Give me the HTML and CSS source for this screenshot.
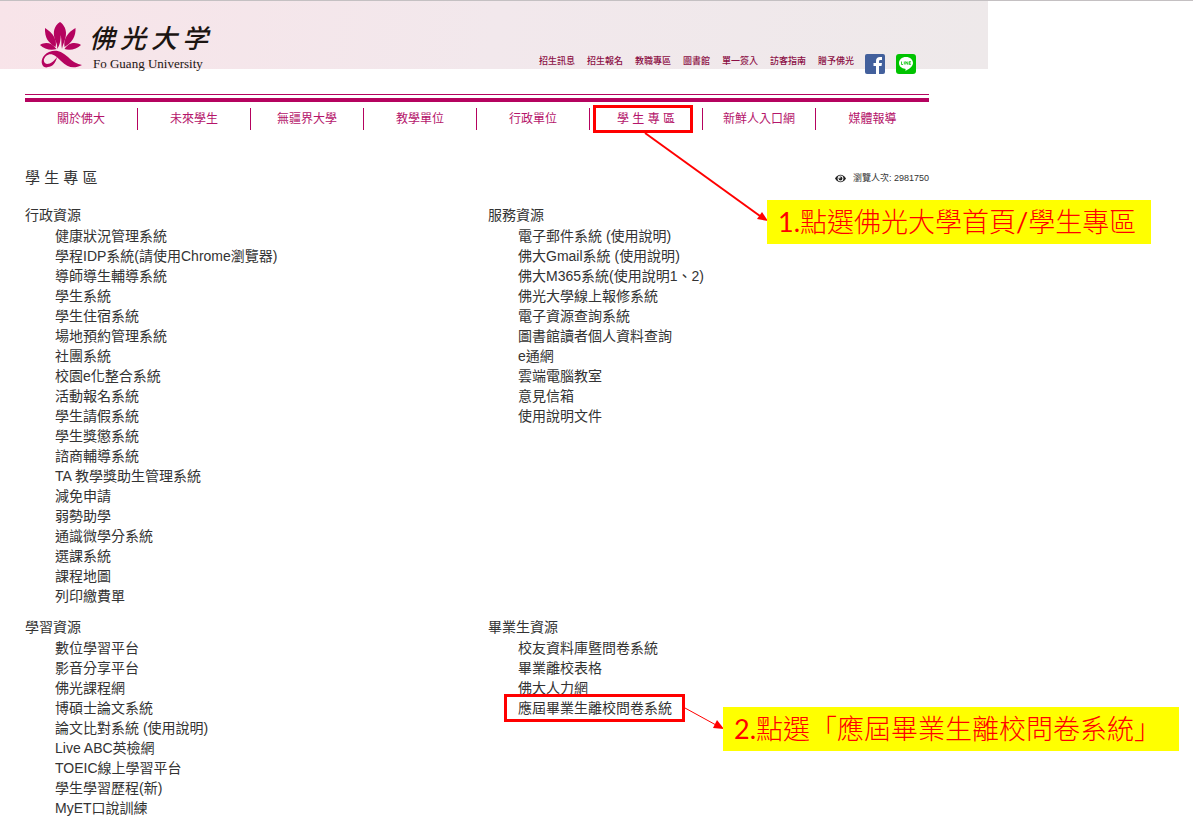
FILE: index.html
```html
<!DOCTYPE html>
<html lang="zh-Hant">
<head>
<meta charset="utf-8">
<meta name="viewport" content="width=device-width, initial-scale=1">
<title>佛光大學 - 學生專區</title>
<link rel="stylesheet" href="styles.css">
</head>
<body>
<div class="page">
  <header class="site-header">
    <a class="logo" href="#">
      <svg class="logo-mark" width="42" height="48" viewBox="0 0 42 48" aria-hidden="true">
        <g fill="#b5035f">
          <path d="M20 1C14 5 13 11 14.500 17C15.500 21 18 23 17 28C19.500 25 20.500 21 20.800 14C21.800 20 21 24 22 28C23 22 26 19 26 12C26 7 23 3 20 1Z"/>
          <path d="M5 7C4.500 16 8 22 15.500 26C17.500 19 13 12 5 7Z"/>
          <path d="M35.500 7C28 11 23 18 24.500 26C32 22 36 15 35.500 7Z"/>
          <path d="M0 24C5 21 11 21 16.500 28C11 30 4 28 0 24Z"/>
          <path d="M41 24C36 21 29 21 24.500 28C30 30 37 28 41 24Z"/>
          <path d="M3 45C0 41 2 34 9 31C17 28 22 31 28 36C33 41 37 43 42 44C34 48 28 47 21 40C15 34 11 31 6 35C3 38 3 42 7 43C11 43 14 40 17 36C16 42 12 46 8 46C6 47 4 46 3 45Z"/>
        </g>
      </svg>
      <span class="logo-text">
        <span class="logo-zh"><span>佛</span><span>光</span><span>大</span><span>学</span></span>
        <span class="logo-en">Fo Guang University</span>
      </span>
    </a>
    <div class="tools">
      <nav class="quick-links" aria-label="快速連結">
        <a href="#">招生訊息</a>
        <a href="#">招生報名</a>
        <a href="#">教職專區</a>
        <a href="#">圖書館</a>
        <a href="#">單一簽入</a>
        <a href="#">訪客指南</a>
        <a href="#">贈予佛光</a>
      </nav>
      <a class="social" href="#" aria-label="Facebook">
        <svg width="20" height="20" viewBox="0 0 20 20"><rect width="20" height="20" rx="2" fill="#43609c"/><path d="M11 20V12H8.500V9H11V7C11 4.300 12.500 3 15 3H17V6H15.500C14.400 6 14 6.500 14 7.500V9H17L16.500 12H14V20Z" fill="#fff"/></svg>
      </a>
      <a class="social" href="#" aria-label="LINE">
        <svg width="20" height="20" viewBox="0 0 20 20"><rect width="20" height="20" rx="3" fill="#00c300"/><path d="M10 3C5.800 3 3 5.700 3 9C3 12.300 5.600 14.300 9 14.800C10 15 9.500 16 9.400 17C12.500 15.500 17 12.500 17 9C17 5.700 14.200 3 10 3Z" fill="#fff"/><path d="M5.500 7.500V10.500H7M8.300 7.500V10.500M9.800 10.500V7.500L11.800 10.500V7.500M14.800 7.500H13.300V10.500H14.800M13.300 9H14.800" fill="none" stroke="#00c300" stroke-width="0.800"/></svg>
      </a>
    </div>
  </header>

  <nav class="main-nav" aria-label="主選單">
    <a href="#">關於佛大</a>
    <a href="#">未來學生</a>
    <a href="#">無疆界大學</a>
    <a href="#">教學單位</a>
    <a href="#">行政單位</a>
    <a href="#">學 生 專 區</a>
    <a href="#">新鮮人入口網</a>
    <a href="#">媒體報導</a>
  </nav>

  <main class="content">
    <div class="title-row">
      <h1 class="title">學 生 專 區</h1>
      <p class="views">
        <svg width="11" height="9" viewBox="0 0 11 9" aria-hidden="true"><path d="M0 4.500C3 -0.500 8 -0.500 11 4.500C8 9.500 3 9.500 0 4.500Z" fill="#222"/><circle cx="5.500" cy="4.500" r="2.900" fill="#fff"/><circle cx="5.500" cy="4.500" r="1.900" fill="#222"/><circle cx="4.800" cy="3.800" r="0.800" fill="#fff"/></svg>
        <span>瀏覽人次: 2981750</span>
      </p>
    </div>

    <div class="resources">
      <section class="group">
        <h2 class="group-title">行政資源</h2>
        <ul class="links">
          <li><a href="#">健康狀況管理系統</a></li>
          <li><a href="#">學程IDP系統(請使用Chrome瀏覽器)</a></li>
          <li><a href="#">導師導生輔導系統</a></li>
          <li><a href="#">學生系統</a></li>
          <li><a href="#">學生住宿系統</a></li>
          <li><a href="#">場地預約管理系統</a></li>
          <li><a href="#">社團系統</a></li>
          <li><a href="#">校園e化整合系統</a></li>
          <li><a href="#">活動報名系統</a></li>
          <li><a href="#">學生請假系統</a></li>
          <li><a href="#">學生獎懲系統</a></li>
          <li><a href="#">諮商輔導系統</a></li>
          <li><a href="#">TA 教學獎助生管理系統</a></li>
          <li><a href="#">減免申請</a></li>
          <li><a href="#">弱勢助學</a></li>
          <li><a href="#">通識微學分系統</a></li>
          <li><a href="#">選課系統</a></li>
          <li><a href="#">課程地圖</a></li>
          <li><a href="#">列印繳費單</a></li>
        </ul>
      </section>
      <section class="group">
        <h2 class="group-title">服務資源</h2>
        <ul class="links">
          <li><a href="#">電子郵件系統</a> (<a href="#">使用說明</a>)</li>
          <li><a href="#">佛大Gmail系統</a> (<a href="#">使用說明</a>)</li>
          <li><a href="#">佛大M365系統</a>(<a href="#">使用說明1</a>、<a href="#">2</a>)</li>
          <li><a href="#">佛光大學線上報修系統</a></li>
          <li><a href="#">電子資源查詢系統</a></li>
          <li><a href="#">圖書館讀者個人資料查詢</a></li>
          <li><a href="#">e通網</a></li>
          <li><a href="#">雲端電腦教室</a></li>
          <li><a href="#">意見信箱</a></li>
          <li><a href="#">使用說明文件</a></li>
        </ul>
      </section>
      <section class="group">
        <h2 class="group-title">學習資源</h2>
        <ul class="links">
          <li><a href="#">數位學習平台</a></li>
          <li><a href="#">影音分享平台</a></li>
          <li><a href="#">佛光課程網</a></li>
          <li><a href="#">博碩士論文系統</a></li>
          <li><a href="#">論文比對系統</a> (<a href="#">使用說明</a>)</li>
          <li><a href="#">Live ABC英檢網</a></li>
          <li><a href="#">TOEIC線上學習平台</a></li>
          <li><a href="#">學生學習歷程(新)</a></li>
          <li><a href="#">MyET口說訓練</a></li>
        </ul>
      </section>
      <section class="group">
        <h2 class="group-title">畢業生資源</h2>
        <ul class="links">
          <li><a href="#">校友資料庫暨問卷系統</a></li>
          <li><a href="#">畢業離校表格</a></li>
          <li><a href="#">佛大人力網</a></li>
          <li><a href="#">應屆畢業生離校問卷系統</a></li>
        </ul>
      </section>
    </div>
  </main>
</div>

<svg class="arrows" width="1193" height="819" viewBox="0 0 1193 819" aria-hidden="true">
  <path d="M645 133L760 216" stroke="#f00" stroke-width="2"/>
  <path d="M768 221L757 219L762 212Z" fill="#f00"/>
  <path d="M685 708L716 725" stroke="#f00" stroke-width="1"/>
  <path d="M724 729L713 728L717 720Z" fill="#f00"/>
</svg>
<div class="mark mark-nav"></div>
<div class="mark mark-link"></div>
<p class="callout callout-nav"><span class="latin">1.</span>點選佛光大學首頁<span class="latin">/</span>學生專區</p>
<p class="callout callout-link"><span class="latin">2.</span>點選「應屆畢業生離校問卷系統」</p>
</body>
</html>
```

FILE: styles.css
```css
* {
  box-sizing: border-box;
}

body {
  position: relative;
  margin: 0;
  border-top: 1px solid #c4c0c2;
  background: #fff;
  color: #333;
  font-family: "Liberation Sans", "Noto Sans CJK TC", sans-serif;
  font-size: 14px;
  line-height: 20px;
}

a {
  color: inherit;
  text-decoration: none;
}

h1,
h2,
p,
ul {
  margin: 0;
  padding: 0;
  font-weight: 400;
}

.page {
  max-width: 988px;
}

/* Header */
.site-header {
  display: flex;
  justify-content: space-between;
  align-items: flex-start;
  padding: 20px 72px 20px 40px;
  background: linear-gradient(100deg, #f8e4e9, #f2e8ec 50%, #eee9ea) no-repeat;
  background-size: 100% 68px;
}

.logo {
  display: flex;
  gap: 7px;
  color: #1c1512;
}

.logo-text {
  display: flex;
  flex-direction: column;
}

.logo-zh {
  display: flex;
  gap: 5px;
  font-size: 26px;
  font-style: italic;
  font-weight: 500;
  line-height: 36px;
}

.logo-en {
  padding-left: 4px;
  font-family: "Liberation Serif", serif;
  font-size: 13px;
  line-height: 14px;
}

.tools {
  display: flex;
  align-items: center;
  gap: 11px;
  padding-top: 33px;
}

.quick-links {
  display: flex;
  gap: 12px;
  margin-bottom: 6px;
  color: #8c0f45;
  font-size: 9px;
  font-weight: 500;
  line-height: 14px;
}

.social svg {
  display: block;
}

/* Main navigation */
.main-nav {
  display: grid;
  grid-template-columns: repeat(8, 1fr);
  margin: 0 59px 0 25px;
  padding-top: 6px;
  border-top: 8px solid #b5035f;
  border-image: linear-gradient(#b5035f 1px, #fff 1px, #fff 4px, #b5035f 4px) 8 0 0 0;
  color: #b5156b;
  font-size: 12px;
  line-height: 22px;
  text-align: center;
}

.main-nav a {
  border-right: 1px solid #b5035f;
}

.main-nav a:last-child {
  border-right: 0;
}

/* Content */
.content {
  padding: 38px 59px 0 25px;
}

.title-row {
  display: flex;
  justify-content: space-between;
  align-items: center;
  margin-bottom: 17px;
}

.title {
  font-size: 15px;
}

.views {
  display: flex;
  align-items: center;
  gap: 7px;
  font-size: 9px;
}

.resources {
  display: grid;
  grid-template-columns: 463px 1fr;
  row-gap: 11px;
}

.group-title {
  font-size: 14px;
}

.links {
  padding: 1px 0 0 30px;
  list-style: none;
}

/* Annotations over the page */
.arrows {
  position: absolute;
  top: -1px;
  left: 0;
}

.mark {
  position: absolute;
  height: 28px;
  border: 3px solid #f00;
}

.mark-nav {
  top: 104px;
  left: 593px;
  width: 100px;
}

.mark-link {
  top: 693px;
  left: 504px;
  width: 181px;
}

.callout {
  position: absolute;
  padding: 0 11px;
  background: #ff0;
  color: #f00;
  font-family: Lato, "Noto Sans CJK TC", sans-serif;
  font-size: 27px;
  font-weight: 300;
  line-height: 44px;
  white-space: nowrap;
}

.latin {
  font-weight: 400;
}

.callout-nav {
  top: 199px;
  left: 767px;
  min-width: 384px;
}

.callout-link {
  top: 706px;
  left: 723px;
  min-width: 456px;
}
```
